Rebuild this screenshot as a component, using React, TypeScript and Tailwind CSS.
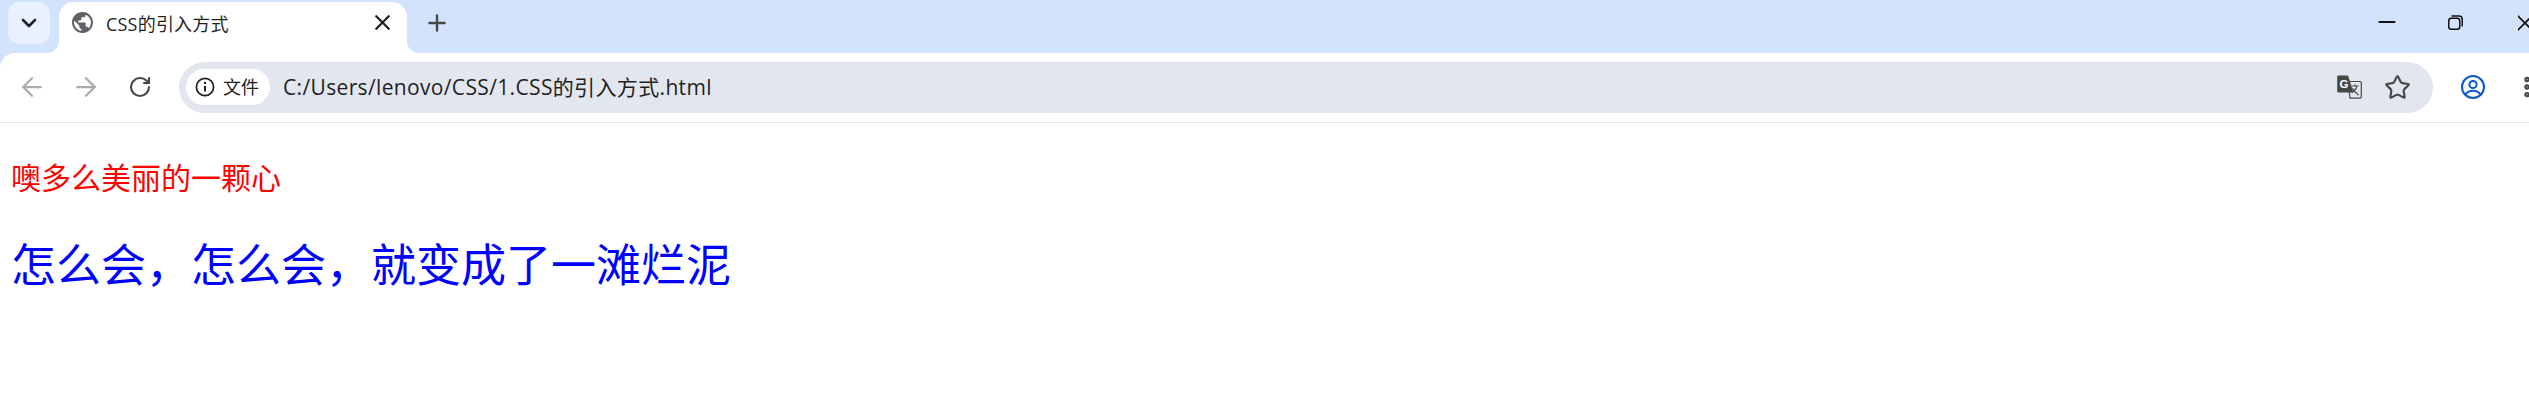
import React from 'react';
import { ChevronDown, X, Plus, ArrowLeft, ArrowRight, RotateCw, Star, EllipsisVertical, Minus } from 'lucide-react';

const uiFont = "font-['Open_Sans','Noto_Sans_CJK_SC',sans-serif]";

const Globe: React.FC = () => (
  <svg viewBox="2 2 20 20" className="w-[21px] h-[21px] shrink-0" fill="#5f6368">
    <path d="M12 2C6.48 2 2 6.48 2 12s4.48 10 10 10 10-4.48 10-10S17.52 2 12 2zm-1 17.93c-3.95-.49-7-3.85-7-7.93 0-.62.08-1.21.21-1.79L9 15v1c0 1.1.9 2 2 2v1.93zm6.9-2.54c-.26-.81-1-1.39-1.9-1.39h-1v-3c0-.55-.45-1-1-1H8v-2h2c.55 0 1-.45 1-1V7h2c1.1 0 2-.9 2-2v-.41c2.93 1.19 5 4.06 5 7.41 0 2.08-.8 3.97-2.1 5.39z" />
  </svg>
);

const RestoreIcon: React.FC = () => (
  <svg viewBox="0 0 15 15" className="w-[15px] h-[15px]" fill="none" stroke="#111" strokeWidth="1.5">
    <rect x="0.75" y="3.25" width="11" height="11" rx="2.5" />
    <path d="M3.5 1h7.5a3.2 3.2 0 0 1 3.2 3.2v7.3" />
  </svg>
);

const TranslateIcon: React.FC = () => (
  <svg viewBox="0 0 25 24" className="w-[25px] h-[24px]">
    <path d="M11 6.5h12a1.3 1.3 0 0 1 1.3 1.3v14a1.3 1.3 0 0 1-1.3 1.3H13z" fill="#e3e7ee" stroke="#474747" strokeWidth="1.2" />
    <path d="M1.5 0.5H11l5.5 17H1.5A1.4 1.4 0 0 1 0.2 16V1.8A1.4 1.4 0 0 1 1.5 0.5z" fill="#474747" />
    <text x="2.4" y="12.6" fontSize="11.5" fontWeight="700" fill="#fff" fontFamily="Liberation Sans">G</text>
    <path d="M14.5 11h7M18 9.5V11M20 11c-.8 3-3 5.5-5.5 6.5M15.5 13c.8 2 3.5 5 6 7" fill="none" stroke="#474747" strokeWidth="1.1" />
  </svg>
);

const AccountIcon: React.FC = () => (
  <svg viewBox="0 0 24 24" className="w-[24px] h-[24px]" fill="none" stroke="#0b57d0" strokeWidth="2">
    <circle cx="12" cy="12" r="11" />
    <circle cx="12" cy="9.5" r="3.6" />
    <path d="M4.5 19.5c2-2.6 4.6-3.7 7.5-3.7s5.500 1.100 7.500 3.700" />
  </svg>
);

const InfoIcon: React.FC = () => (
  <svg viewBox="0 0 20 20" className="w-[20px] h-[20px] shrink-0" fill="none" stroke="#1f1f1f" strokeWidth="1.7">
    <circle cx="10" cy="10" r="8.6" />
    <path d="M10 9v5.500" strokeWidth="2" />
    <circle cx="10" cy="6" r="1.200" fill="#1f1f1f" stroke="none" />
  </svg>
);

const TabStrip: React.FC = () => (
  <div className="h-[53px] flex items-start pt-[2px] pl-[8px] bg-[#d3e3fd]">
    <div className="w-[42px] h-[42px] rounded-[12px] bg-[#e9f1ff] flex items-center justify-center">
      <ChevronDown size={24} strokeWidth={2.600} color="#1f1f1f" />
    </div>

    {/* active tab, flares sit over the strip */}
    <div className="relative ml-[9px] w-[348px] h-[51px] rounded-t-[15px] bg-white flex items-start pt-[10px] pl-[13px] pr-[12px]">
      <svg viewBox="0 0 12 12" className="absolute left-[-12px] bottom-0 w-[12px] h-[12px]" fill="#fff">
        <path d="M12 0v12H0a12 12 0 0 0 12-12z" />
      </svg>
      <svg viewBox="0 0 12 12" className="absolute right-[-12px] bottom-0 w-[12px] h-[12px]" fill="#fff">
        <path d="M0 0v12h12A12 12 0 0 1 0 0z" />
      </svg>
      <Globe />
      <span className="ml-[13px] text-[18px] leading-[24px] tracking-[0.2px] text-[#1f1f1f] whitespace-nowrap">CSS的引入方式</span>
      <X size={25} strokeWidth={2.200} color="#1f1f1f" className="ml-auto mt-[-2px]" />
    </div>

    <Plus size={26} strokeWidth={2.200} color="#474747" className="ml-[17px] mt-[8px]" />

    <div className="ml-auto flex items-start">
      <Minus size={26} strokeWidth={1.800} color="#111" className="mt-[7px] mr-[48px]" />
      <div className="mt-[13px] mr-[55px]"><RestoreIcon /></div>
      <div className="w-[11px] h-[40px] overflow-hidden pt-[6px]">
        <X size={30} strokeWidth={1.400} color="#111" className="ml-[-8px] max-w-none" />
      </div>
    </div>
  </div>
);

const Toolbar: React.FC = () => (
  <div className="bg-[#d3e3fd]">
    <div className="h-[70px] bg-white rounded-tl-[15px] border-b border-[#e1e1e1] flex items-center pb-[1px] pl-[17px]">
      <ArrowLeft size={30} strokeWidth={1.800} color="#a9abad" className="shrink-0" />
      <ArrowRight size={30} strokeWidth={1.800} color="#a9abad" className="ml-[24px] shrink-0" />
      <RotateCw size={24} strokeWidth={2.100} color="#474747" className="ml-[27px] shrink-0" />

      {/* omnibox */}
      <div className="ml-[27px] w-[2254px] shrink-0 h-[51px] rounded-full bg-[#e2e7ef] flex items-center pl-[7px]">
        <div className="w-[84px] h-[36px] rounded-full bg-white flex items-center pl-[9px]">
          <InfoIcon />
          <span className="ml-[8px] text-[18px] leading-[24px] text-[#1f1f1f]">文件</span>
        </div>
        <span className="ml-[13px] text-[21px] leading-[28px] tracking-[0.35px] text-[#1f1f1f] whitespace-nowrap">C:/Users/lenovo/CSS/1.CSS的引入方式.html</span>
        <div className="ml-auto flex items-center mr-[22px]">
          <TranslateIcon />
          <Star size={27} strokeWidth={1.900} color="#474747" className="ml-[22px]" />
        </div>
      </div>

      <div className="ml-[28px] shrink-0"><AccountIcon /></div>
      <EllipsisVertical size={26} strokeWidth={3} color="#474747" className="ml-[29px] shrink-0" />
    </div>
  </div>
);

const App: React.FC = () => {
  return (
    <div className={`w-[2529px] h-[408px] overflow-hidden bg-white ${uiFont}`}>
      <TabStrip />
      <Toolbar />
      <div className="pl-[11px] pt-[33px] font-['Noto_Sans_CJK_SC',sans-serif]">
        <p className="text-[30px] leading-[40px] text-[#ff0000]">噢多么美丽的一颗心</p>
        <p className="mt-[37px] text-[45px] leading-[60px] text-[#0000ff]">怎么会，怎么会，就变成了一滩烂泥</p>
      </div>
    </div>
  );
};

export default App;
